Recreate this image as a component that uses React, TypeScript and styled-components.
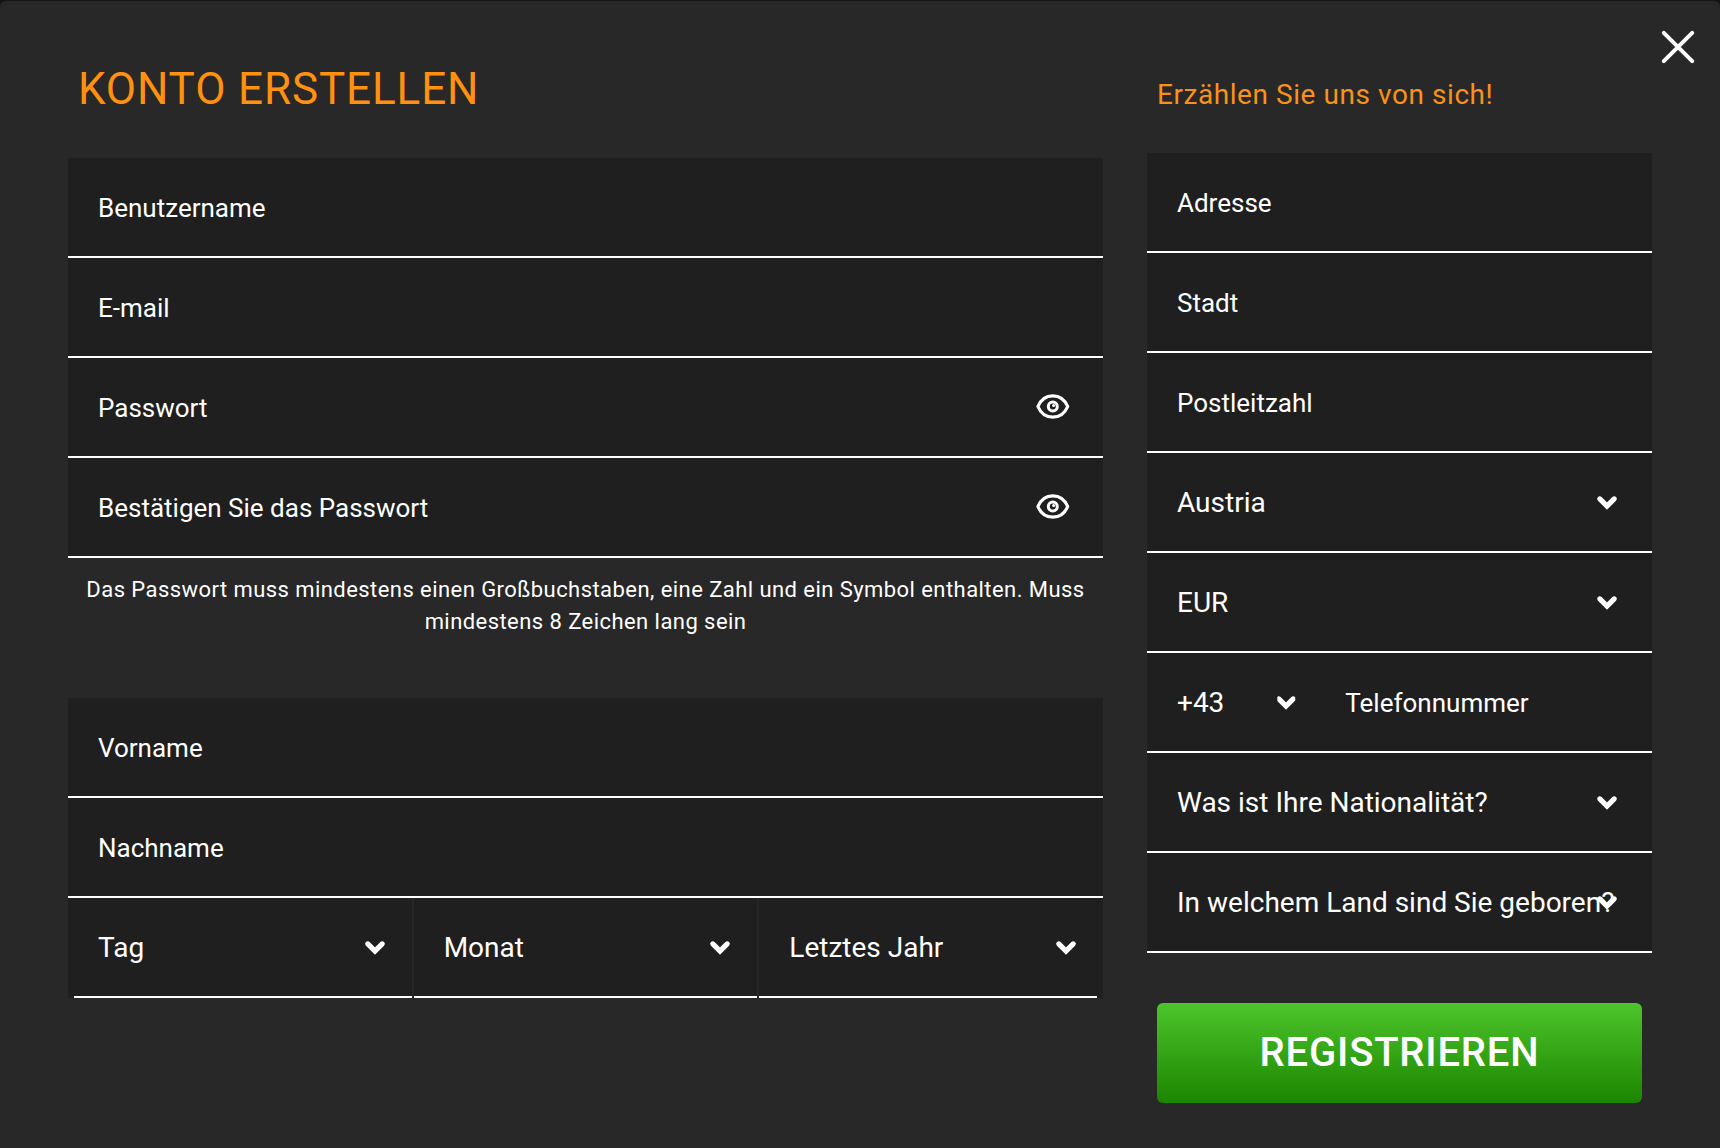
import React, { useState } from "react";
import styled, { createGlobalStyle } from "styled-components";

const GlobalStyle = createGlobalStyle`
  *, *::before, *::after { box-sizing: border-box; }
  body {
    margin: 0;
    background: #141414;
    color: #fff;
    font-family: Roboto, "Liberation Sans", sans-serif;
  }
`;

const Dialog = styled.main`
  min-height: calc(100vh - 1px);
  margin-top: 1px;
  padding: 24px 68px 44px;
  border-radius: 6px 6px 0 0;
  background: #282828;
  position: relative;
`;

const CloseButton = styled.button`
  position: absolute;
  top: 24px;
  right: 20px;
  width: 44px;
  height: 44px;
  padding: 4px;
  border: 0;
  background: none;
  color: #fff;
  cursor: pointer;
  svg { display: block; width: 36px; height: 36px; }
`;

const Form = styled.form`
  display: grid;
  grid-template-columns: 1035fr 505fr;
  column-gap: 44px;
  align-items: start;
`;

const Column = styled.div`
  display: flex;
  flex-direction: column;
`;

const Title = styled.h1`
  margin: 34px 10px 39px;
  font-size: 44px;
  line-height: 60px;
  font-weight: 400;
  letter-spacing: 0.02em;
  text-transform: uppercase;
  color: #ff9010;
`;

const Subtitle = styled.h2`
  margin: 50px 10px 38px;
  font-size: 28px;
  line-height: 40px;
  font-weight: 400;
  letter-spacing: 0.02em;
  color: #f8921a;
`;

const Row = styled.div`
  display: flex;
  align-items: center;
  position: relative;
  height: 100px;
  border-bottom: 2px solid #fff;
  background: #1f1f1f;
`;

const TextInput = styled.input`
  flex: 1;
  min-width: 0;
  height: 100%;
  padding: 2px 30px 0;
  border: 0;
  outline-offset: -2px;
  background: none;
  color: #fff;
  font: 400 26px/32px Roboto, "Liberation Sans", sans-serif;
  &::placeholder { color: #fff; opacity: 1; }
`;

const EyeButton = styled.button`
  margin-right: 30px;
  padding: 0;
  border: 0;
  background: none;
  color: #fff;
  cursor: pointer;
  svg { display: block; width: 40px; height: 40px; }
`;

const Hint = styled.p`
  margin: 16px 0 60px;
  padding: 0 16px;
  font-size: 22px;
  line-height: 32px;
  letter-spacing: 0.02em;
  text-align: center;
`;

const SelectBox = styled.div`
  position: relative;
  flex: 1;
  min-width: 0;
  height: 100%;
`;

const StyledSelect = styled.select`
  width: 100%;
  height: 100%;
  padding: 2px 0 0 30px;
  border: 0;
  outline-offset: -2px;
  appearance: none;
  background: none;
  color: #fff;
  font: 400 28px/36px Roboto, "Liberation Sans", sans-serif;
  option { background: #1f1f1f; }
`;

const ChevronIcon = styled.svg<{ $inset: number; $narrow: boolean }>`
  position: absolute;
  top: 50%;
  right: ${(p) => p.$inset}px;
  width: 22px;
  height: 16px;
  margin-top: -7px;
  clip-path: ${(p) => (p.$narrow ? "inset(0 2px)" : "none")};
  pointer-events: none;
`;

const DateRow = styled.div`
  display: grid;
  grid-template-columns: repeat(3, 1fr);
  gap: 2px;
  height: 100px;
  background: #262626;
`;

const DateCell = styled.div`
  display: flex;
  padding-bottom: 2px;
  background: linear-gradient(#fff, #fff) bottom / 100% 2px no-repeat #1f1f1f;
  &:first-child { background-position: right bottom; background-size: calc(100% - 6px) 2px; }
  &:last-child { background-position: left bottom; background-size: calc(100% - 6px) 2px; }
`;

const PhoneGrid = styled(Row)`
  display: grid;
  grid-template-columns: 1fr 2fr;
`;

const Submit = styled.button`
  height: 100px;
  margin: 50px 10px 0;
  border: 0;
  border-radius: 6px;
  background: linear-gradient(#4dc52b, #1b8500);
  color: #fff;
  font: 500 40px/48px Roboto, "Liberation Sans", sans-serif;
  letter-spacing: 0.02em;
  text-transform: uppercase;
  cursor: pointer;
`;

function Field({ label, type = "text" }: { label: string; type?: string }) {
  return <TextInput type={type} placeholder={label} aria-label={label} />;
}

function PasswordRow({ label }: { label: string }) {
  const [visible, setVisible] = useState(false);
  return (
    <Row>
      <Field label={label} type={visible ? "text" : "password"} />
      <EyeButton type="button" aria-label="Passwort anzeigen" onClick={() => setVisible(!visible)}>
        <svg viewBox="0 0 40 40" fill="none" stroke="currentColor" strokeWidth="3.2">
          <path d="M4.9 19.5C8 12.1 13.7 8.8 19.8 8.8S31.6 12.1 34.7 19.5C31.6 26.9 25.9 30.2 19.8 30.2S8 26.9 4.9 19.5Z" strokeLinejoin="round" />
          <circle cx="19.8" cy="19.5" r="4.5" strokeWidth="3" />
          <circle cx="20.6" cy="18.4" r="1.5" fill="currentColor" stroke="none" />
        </svg>
      </EyeButton>
    </Row>
  );
}

type DropdownProps = { label: string; value?: string; inset?: number; narrow?: boolean };

function Dropdown({ label, value, inset = 34, narrow = false }: DropdownProps) {
  return (
    <SelectBox>
      <StyledSelect aria-label={label}>
        <option>{value ?? label}</option>
      </StyledSelect>
      <ChevronIcon
        $inset={inset}
        $narrow={narrow}
        viewBox="0 0 22 16"
        fill="none"
        stroke="#fff"
        strokeWidth="5.2"
        strokeLinecap="round"
      >
        <path d="M3.8 3.9L11 11L18.2 3.9" />
      </ChevronIcon>
    </SelectBox>
  );
}

export default function App() {
  return (
    <>
      <GlobalStyle />
      <Dialog>
        <CloseButton type="button" aria-label="Schließen">
          <svg viewBox="0 0 36 36" stroke="currentColor" strokeWidth="4" strokeLinecap="round">
            <path d="M3.8 3.8L32.2 32.2M32.2 3.8L3.8 32.2" />
          </svg>
        </CloseButton>
        <Form onSubmit={(e) => e.preventDefault()}>
          <Column>
            <Title>Konto erstellen</Title>
            <Row><Field label="Benutzername" /></Row>
            <Row><Field label="E-mail" type="email" /></Row>
            <PasswordRow label="Passwort" />
            <PasswordRow label="Bestätigen Sie das Passwort" />
            <Hint>
              Das Passwort muss mindestens einen Großbuchstaben, eine Zahl und ein Symbol enthalten. Muss
              mindestens 8 Zeichen lang sein
            </Hint>
            <Row><Field label="Vorname" /></Row>
            <Row><Field label="Nachname" /></Row>
            <DateRow>
              <DateCell><Dropdown label="Tag" inset={26} /></DateCell>
              <DateCell><Dropdown label="Monat" inset={26} /></DateCell>
              <DateCell><Dropdown label="Letztes Jahr" inset={26} /></DateCell>
            </DateRow>
          </Column>
          <Column>
            <Subtitle>Erzählen Sie uns von sich!</Subtitle>
            <Row><Field label="Adresse" /></Row>
            <Row><Field label="Stadt" /></Row>
            <Row><Field label="Postleitzahl" /></Row>
            <Row><Dropdown label="Land" value="Austria" /></Row>
            <Row><Dropdown label="Währung" value="EUR" /></Row>
            <PhoneGrid>
              <Dropdown label="Vorwahl" value="+43" inset={18} narrow />
              <Field label="Telefonnummer" type="tel" />
            </PhoneGrid>
            <Row><Dropdown label="Was ist Ihre Nationalität?" /></Row>
            <Row><Dropdown label="In welchem Land sind Sie geboren?" /></Row>
            <Submit type="submit">Registrieren</Submit>
          </Column>
        </Form>
      </Dialog>
    </>
  );
}
